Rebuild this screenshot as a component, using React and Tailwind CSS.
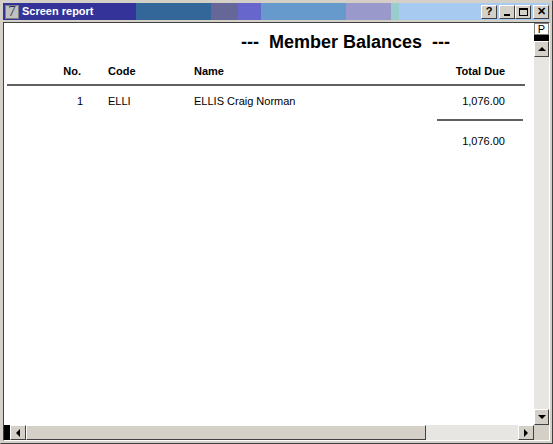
export default function App() {
  const f = { fontFamily: '"Liberation Sans", Arial, sans-serif' };
  const btn = "w-[16px] h-[14px] bg-[#d4d0c8] border border-t-white border-l-white border-r-[#404040] border-b-[#404040] flex items-center justify-center text-[11px] leading-none font-bold text-black";
  return (
    <div style={f} className="w-[553px] h-[444px] bg-[#d4d0c8] border border-t-[#d4d0c8] border-l-[#d4d0c8] border-r-[#404040] border-b-[#404040] p-[2px] flex flex-col overflow-hidden">
      <div className="h-[17px] flex items-center relative">
        <div className="absolute inset-0 flex">
          <div className="w-[133px] bg-[#333399]" />
          <div className="w-[75px] bg-[#336699]" />
          <div className="w-[27px] bg-[#666699]" />
          <div className="w-[23px] bg-[#6666cc]" />
          <div className="w-[85px] bg-[#6699cc]" />
          <div className="w-[45px] bg-[#9999cc]" />
          <div className="w-[8px] bg-[#99cccc]" />
          <div className="flex-1 bg-[#a6caf0]" />
        </div>
        <div className="relative flex items-center gap-[3px] pl-[2px]">
          <div className="w-[14px] h-[14px] bg-[#c0c0c0] border border-[#808080] flex items-center justify-center text-[15px] leading-none text-[#333366]" style={{ fontFamily: '"Liberation Serif", serif' }}>7</div>
          <span className="text-white font-bold text-[11px]">Screen report</span>
        </div>
        <div className="relative ml-auto flex items-center pr-[1px]">
          <div className={btn}>?</div>
          <div className="w-[2px]" />
          <div className={btn}><div className="w-[6px] h-[2px] bg-black mt-[7px]" /></div>
          <div className={btn}><div className="w-[9px] h-[8px] border border-black border-t-2" /></div>
          <div className="w-[2px]" />
          <div className={btn}>✕</div>
        </div>
      </div>
      <div className="mt-[2px] flex-1 flex flex-col border border-t-[#404040] border-l-[#404040] border-r-white border-b-white">
        <div className="flex flex-1 min-h-0">
          <div className="flex-1 bg-white relative">
            <div className="pl-[237px] pt-[6px] text-[18px] font-bold text-black whitespace-pre">---  Member Balances  ---</div>
            <div className="flex text-[11px] font-bold mt-[8px] h-[14px] items-center">
              <div className="w-[77px] text-right">No.</div>
              <div className="ml-[27px] w-[86px]">Code</div>
              <div className="flex-1">Name</div>
              <div className="pr-[29px]">Total Due</div>
            </div>
            <div className="ml-[3px] mr-[9px] mt-[6px] h-[2px] bg-[#606060]" />
            <div className="flex text-[11px] mt-[8px] h-[14px] items-center">
              <div className="w-[79px] text-right">1</div>
              <div className="ml-[25px] w-[86px]">ELLI</div>
              <div className="flex-1">ELLIS Craig Norman</div>
              <div className="pr-[29px]">1,076.00</div>
            </div>
            <div className="flex justify-end mt-[11px] pr-[11px]"><div className="w-[86px] h-[2px] bg-[#606060]" /></div>
            <div className="flex justify-end text-[11px] mt-[12px] pr-[29px]">1,076.00</div>
          </div>
          <div className="w-[15px] bg-[#e8e6e2] flex flex-col">
            <div className="h-[12px] bg-white border border-[#808080] text-[11px] leading-none flex justify-center">P</div>
            <div className="h-[6px] bg-black" />
            <div className="h-[16px] bg-[#d4d0c8] border border-t-white border-l-white border-r-[#404040] border-b-[#404040] flex items-center justify-center">
              <div className="w-0 h-0 border-l-[4px] border-r-[4px] border-b-[4px] border-l-transparent border-r-transparent border-b-black" />
            </div>
            <div className="flex-1" />
            <div className="h-[16px] bg-[#d4d0c8] border border-t-white border-l-white border-r-[#404040] border-b-[#404040] flex items-center justify-center">
              <div className="w-0 h-0 border-l-[4px] border-r-[4px] border-t-[4px] border-l-transparent border-r-transparent border-t-black" />
            </div>
          </div>
        </div>
        <div className="h-[15px] flex bg-[#e8e6e2]">
          <div className="w-[6px] bg-black" />
          <div className="w-[16px] bg-[#d4d0c8] border border-t-white border-l-white border-r-[#404040] border-b-[#404040] flex items-center justify-center">
            <div className="w-0 h-0 border-t-[4px] border-b-[4px] border-r-[4px] border-t-transparent border-b-transparent border-r-black" />
          </div>
          <div className="w-[400px] bg-[#d4d0c8] border border-t-white border-l-white border-r-[#404040] border-b-[#404040]" />
          <div className="flex-1" />
          <div className="w-[16px] bg-[#d4d0c8] border border-t-white border-l-white border-r-[#404040] border-b-[#404040] flex items-center justify-center">
            <div className="w-0 h-0 border-t-[4px] border-b-[4px] border-l-[4px] border-t-transparent border-b-transparent border-l-black" />
          </div>
          <div className="w-[15px] bg-[#d4d0c8]" />
        </div>
      </div>
    </div>
  );
}
